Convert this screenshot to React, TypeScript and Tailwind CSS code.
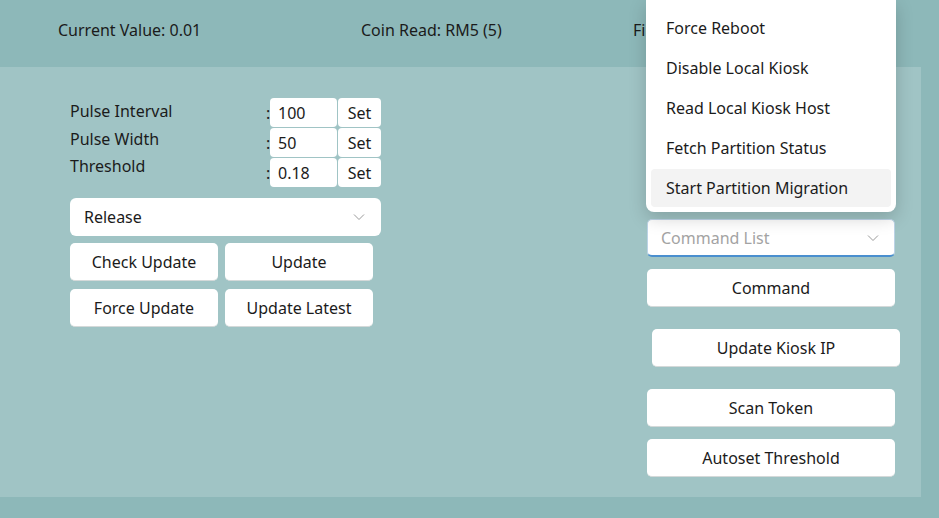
import React from "react";

const font = { fontFamily: '"Noto Sans", "Open Sans", sans-serif' };

function Chevron({ className = "" }: { className?: string }) {
  return (
    <svg width="12" height="8" viewBox="0 0 12 8" className={className}>
      <path d="M1 1.5 L6 6.5 L11 1.5" fill="none" stroke="currentColor" strokeWidth="1" />
    </svg>
  );
}

function Btn({ children, className = "" }: { children: React.ReactNode; className?: string }) {
  return (
    <div
      className={
        "h-[38px] flex items-center justify-center bg-white rounded-[5px] border-b border-[#d4d9d9] text-[16px] text-[#1b1b1b] " +
        className
      }
    >
      {children}
    </div>
  );
}

export default function App() {
  const rows = [
    { label: "Pulse Interval", value: "100" },
    { label: "Pulse Width", value: "50" },
    { label: "Threshold", value: "0.18" },
  ];
  const menu = [
    "Force Reboot",
    "Disable Local Kiosk",
    "Read Local Kiosk Host",
    "Fetch Partition Status",
    "Start Partition Migration",
  ];
  return (
    <div style={font} className="relative w-[939px] h-[518px] overflow-hidden bg-[#8db8b9] text-[#1b1b1b] flex flex-col">
      {/* header */}
      <div className="h-[67px] flex items-center pl-[58px] text-[16px] pb-[7px]">
        <div className="w-[303px]">Current Value: 0.01</div>
        <div className="w-[272px]">Coin Read: RM5 (5)</div>
        <div className="w-[13px] overflow-hidden whitespace-nowrap">Firmware Version</div>
      </div>
      {/* main panel */}
      <div className="w-[921px] h-[430px] bg-[#a0c4c5] flex">
        {/* left column */}
        <div className="pl-[70px] pt-[31px] w-[381px] box-content flex flex-col">
          <div className="flex">
            <div className="w-[196px] flex flex-col text-[16px] leading-[27.5px]">
              {rows.map((r) => (
                <div key={r.label}>{r.label}</div>
              ))}
            </div>
            <div className="flex flex-col gap-[1px]">
              {rows.map((r) => (
                <div key={r.label} className="flex items-center h-[29px]">
                  <span className="w-[4px] text-[16px] leading-none">:</span>
                  <div className="w-[67px] h-[29px] bg-white rounded-[4px] flex items-center pl-[8px] text-[16px]">
                    {r.value}
                  </div>
                  <div className="ml-[1px] w-[43px] h-[29px] bg-white rounded-[4px] flex items-center justify-center text-[16px]">
                    Set
                  </div>
                </div>
              ))}
            </div>
          </div>
          <div className="mt-[11px] w-[311px] h-[38px] bg-white rounded-[6px] flex items-center pl-[14px] pr-[16px] text-[16px]">
            <span className="flex-1">Release</span>
            <Chevron className="text-[#9a9a9a]" />
          </div>
          <div className="mt-[7px] grid grid-cols-[148px_148px] gap-x-[7px] gap-y-[8px]">
            <Btn>Check Update</Btn>
            <Btn>Update</Btn>
            <Btn>Force Update</Btn>
            <Btn>Update Latest</Btn>
          </div>
        </div>
        {/* right column */}
        <div className="ml-[196px] pt-[152px] w-[253px] flex flex-col">
          <div className="w-[248px] h-[38px] bg-white rounded-[5px] border border-[#bcd3e6] border-b-2 border-b-[#4a8fcf] flex items-center pl-[13px] pr-[15px] text-[16px] text-[#a3a3a3]">
            <span className="flex-1">Command List</span>
            <Chevron className="text-[#9a9a9a]" />
          </div>
          <Btn className="mt-[12px] w-[248px]">Command</Btn>
          <Btn className="mt-[22px] w-[248px] ml-[5px]">Update Kiosk IP</Btn>
          <Btn className="mt-[22px] w-[248px]">Scan Token</Btn>
          <Btn className="mt-[12px] w-[248px]">Autoset Threshold</Btn>
        </div>
      </div>
      {/* dropdown popup */}
      <div className="absolute left-[646px] top-0 w-[250px] bg-white rounded-b-[8px] shadow-[0_6px_18px_rgba(0,0,0,0.18)] pt-[9px] pb-[5px] px-[5px] flex flex-col gap-[2px]">
        {menu.map((m, i) => (
          <div
            key={m}
            className={
              "h-[38px] flex items-center pl-[15px] text-[16px] text-[#1b1b1b] rounded-[4px] " +
              (i === menu.length - 1 ? "bg-[#f3f3f3]" : "")
            }
          >
            {m}
          </div>
        ))}
      </div>
    </div>
  );
}
